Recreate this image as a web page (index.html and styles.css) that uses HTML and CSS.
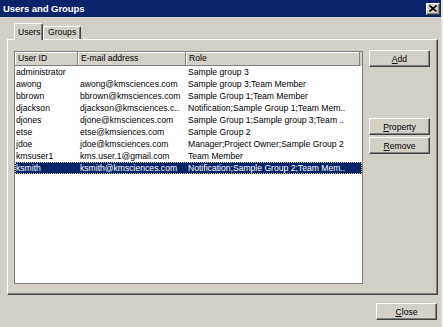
FILE: index.html
```html
<!DOCTYPE html>
<html>
<head>
<meta charset="utf-8">
<title>Users and Groups</title>
<link rel="stylesheet" href="styles.css">
</head>
<body>
<div class="window">
  <div class="titlebar">
    <span class="title">Users and Groups</span>
    <span class="xbtn"><svg width="8" height="7" viewBox="0 0 8 7"><path d="M0.5 0.5L7.5 6.5M7.5 0.5L0.5 6.5" stroke="#000" stroke-width="1.6"/></svg></span>
  </div>
  <div class="body">
    <div class="tabs">
      <div class="tab active">Users</div>
      <div class="tab">Groups</div>
    </div>
    <div class="panel">
      <div class="list">
        <div class="lhead">
          <div class="hc">User ID</div>
          <div class="hc">E-mail address</div>
          <div class="hc">Role</div>
        </div>
        <div class="row"><span>administrator</span><span></span><span>Sample group 3</span></div>
        <div class="row"><span>awong</span><span>awong@kmsciences.com</span><span>Sample group 3;Team Member</span></div>
        <div class="row"><span>bbrown</span><span>bbrown@kmsciences.com</span><span>Sample Group 1;Team Member</span></div>
        <div class="row"><span>djackson</span><span>djackson@kmsciences.c..</span><span>Notification;Sample Group 1;Team Mem..</span></div>
        <div class="row"><span>djones</span><span>djone@kmsciences.com</span><span>Sample Group 1;Sample group 3;Team ..</span></div>
        <div class="row"><span>etse</span><span>etse@kmsiences.com</span><span>Sample Group 2</span></div>
        <div class="row"><span>jdoe</span><span>jdoe@kmsciences.com</span><span>Manager;Project Owner;Sample Group 2</span></div>
        <div class="row"><span>kmsuser1</span><span>kms.user.1@gmail.com</span><span>Team Member</span></div>
        <div class="row selected"><span>ksmith</span><span>ksmith@kmsciences.com</span><span>Notification;Sample Group 2;Team Mem..</span></div>
      </div>
      <div class="side">
        <button class="btn"><u>A</u>dd</button>
        <button class="btn prop"><u>P</u>roperty</button>
        <button class="btn"><u>R</u>emove</button>
      </div>
    </div>
    <div class="footer">
      <button class="btn"><u>C</u>lose</button>
    </div>
  </div>
</div>
</body>
</html>
```
FILE: styles.css
```css
* { box-sizing: border-box; }
html, body { margin: 0; padding: 0; }
body {
  width: 443px;
  height: 327px;
  overflow: hidden;
  background: #d4d0c8;
  font-family: "Liberation Sans", Arial, sans-serif;
  font-size: 8.6px;
  color: #000;
}
.window {
  width: 443px;
  height: 327px;
  background: #d4d0c8;
  border-right: 2px solid #e8e6e0;
}
.titlebar {
  height: 17px;
  background: #0a246a;
  display: flex;
  align-items: center;
  justify-content: space-between;
  padding: 0 1px 0 3px;
  color: #fff;
}
.title {
  font-weight: bold;
  font-size: 9.6px;
  letter-spacing: -0.1px;
}
.xbtn {
  width: 14px;
  height: 12px;
  background: #d4d0c8;
  border-top: 1px solid #fff;
  border-left: 1px solid #fff;
  border-right: 1px solid #404040;
  border-bottom: 1px solid #404040;
  box-shadow: inset -1px -1px #808080;
  display: flex;
  align-items: center;
  justify-content: center;
}
.xbtn svg { display: block; }
.body {
  padding: 6px 0 0 7px;
}
.tabs {
  display: flex;
  align-items: flex-end;
  height: 16px;
  padding-left: 7px;
}
.tab {
  height: 13px;
  width: 38px;
  padding-left: 4px;
  line-height: 11px;
  background: #d4d0c8;
  border-top: 1px solid #fff;
  border-left: 1px solid #fff;
  border-right: 1px solid #404040;
  box-shadow: inset -1px 0 #808080;
  border-radius: 2px 2px 0 0;
}
.tab.active {
  position: relative;
  z-index: 1;
  height: 17px;
  width: 29px;
  padding-left: 3px;
  line-height: 16px;
  margin-bottom: -1px;
}
.panel {
  width: 431px;
  height: 256px;
  border-top: 1px solid #fff;
  border-left: 1px solid #fff;
  border-right: 1px solid #404040;
  border-bottom: 1px solid #404040;
  box-shadow: inset -1px -1px #808080;
  padding: 11px 0 0 6px;
  display: flex;
  gap: 6px;
}
.list {
  width: 349px;
  height: 233px;
  background: #fff;
  border: 1px solid #808080;
  overflow: hidden;
}
.lhead {
  display: grid;
  grid-template-columns: 63px 108px 174px;
  height: 14px;
  background: #d4d0c8;
}
.hc {
  border-right: 1px solid #808080;
  border-bottom: 1px solid #808080;
  box-shadow: inset 1px 1px #fff;
  padding-left: 3px;
  line-height: 13px;
  white-space: nowrap;
  overflow: hidden;
}
.row {
  display: grid;
  grid-template-columns: 63px 108px 176px;
  height: 12px;
  line-height: 12px;
  white-space: nowrap;
}
.row span { overflow: hidden; }
.row span:first-child { padding-left: 1px; }
.row span + span { padding-left: 2px; }
.row.selected {
  background: #0a246a;
  color: #fff;
  outline: 1px dotted #d8cf8a;
  outline-offset: -1px;
}
.side {
  width: 61px;
  margin-top: -1px;
  display: flex;
  flex-direction: column;
}
.btn {
  width: 61px;
  height: 17px;
  padding: 0;
  margin: 0;
  background: #d4d0c8;
  border-top: 1px solid #fff;
  border-left: 1px solid #fff;
  border-right: 1px solid #404040;
  border-bottom: 1px solid #404040;
  box-shadow: inset -1px -1px #808080;
  font-family: "Liberation Sans", Arial, sans-serif;
  font-size: 8.6px;
  color: #000;
  text-align: center;
  line-height: 14px;
}
.btn.prop { margin-top: 51px; margin-bottom: 2px; }
.footer {
  display: flex;
  justify-content: flex-end;
  padding: 8px 4px 0 0;
}
```
